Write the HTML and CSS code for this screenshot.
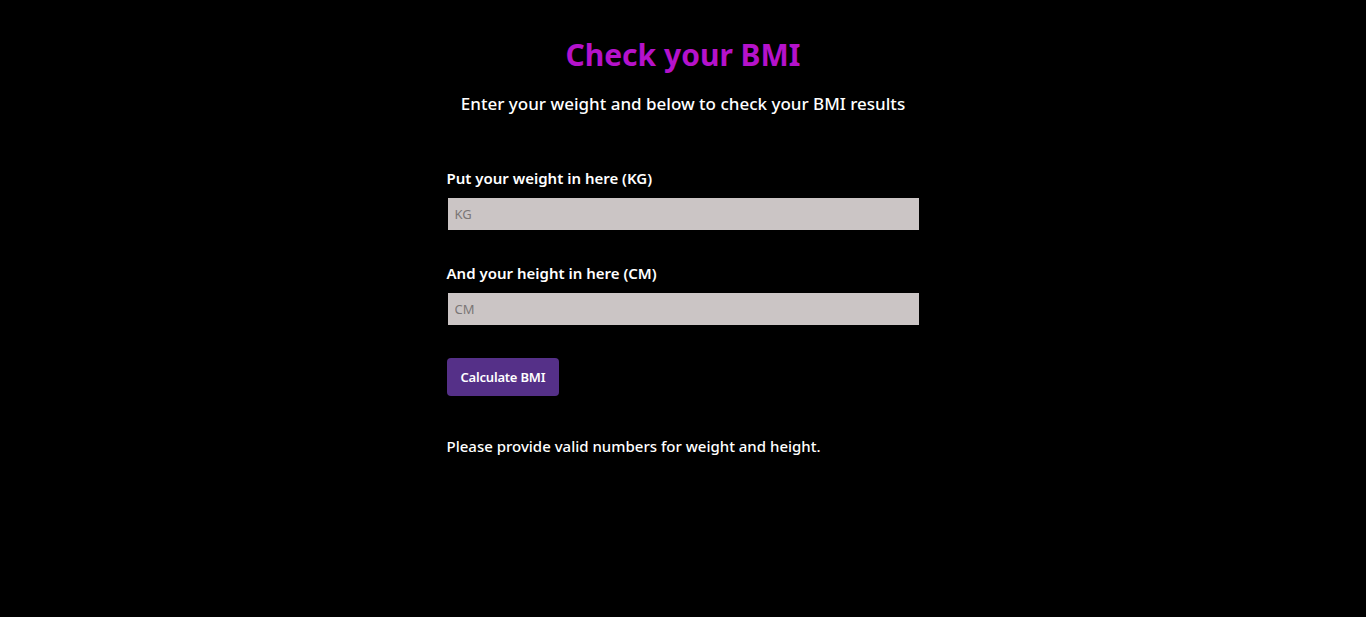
FILE: index.html
```html
<!DOCTYPE html>
<html lang="en">
<head>
<meta charset="utf-8">
<title>Check your BMI</title>
<link rel="stylesheet" href="styles.css">
</head>
<body>
<main class="page">
  <header class="intro">
    <h1 class="title">Check your BMI</h1>
    <p class="subtitle">Enter your weight and below to check your BMI results</p>
  </header>
  <form class="form">
    <div class="field">
      <label class="label" for="weight">Put your weight in here (KG)</label>
      <input class="input" id="weight" type="text" placeholder="KG">
    </div>
    <div class="field">
      <label class="label" for="height">And your height in here (CM)</label>
      <input class="input" id="height" type="text" placeholder="CM">
    </div>
    <button class="button" type="button">Calculate BMI</button>
    <p class="message">Please provide valid numbers for weight and height.</p>
  </form>
</main>
</body>
</html>
```

FILE: styles.css
```css
* { box-sizing: border-box; }
html, body { margin: 0; padding: 0; }
body {
  background: #000;
  color: #fff;
  font-family: "Noto Sans", "Open Sans", sans-serif;
  min-height: 617px;
}
.page {
  display: flex;
  flex-direction: column;
  align-items: center;
  padding-top: 33px;
}
.intro { text-align: center; }
.title {
  margin: 0;
  font-size: 30px;
  line-height: 44px;
  font-weight: 700;
  color: #b512cb;
}
.subtitle {
  margin: 15px 0 0;
  font-size: 17px;
  line-height: 24px;
  font-weight: 500;
}
.form {
  width: 473px;
  margin-top: 51px;
  display: flex;
  flex-direction: column;
  align-items: flex-start;
}
.field {
  width: 100%;
  display: flex;
  flex-direction: column;
  gap: 8px;
  margin-bottom: 31px;
}
.label {
  font-size: 15px;
  line-height: 22px;
  font-weight: 600;
}
.input {
  width: 100%;
  height: 34px;
  margin: 0;
  border: 1px solid #000;
  background: #cbc5c5;
  padding: 0 7px;
  font-family: inherit;
  font-size: 13px;
  color: #333;
  outline: none;
}
.input::placeholder { color: #7a7676; }
.button {
  margin-top: 1px;
  height: 38px;
  padding: 0 14px;
  border: none;
  border-radius: 4px;
  background: #553088;
  color: #fff;
  font-family: inherit;
  font-size: 13px;
  font-weight: 600;
  letter-spacing: -0.2px;
}
.message {
  margin: 39px 0 0;
  font-size: 15px;
  line-height: 22px;
  font-weight: 500;
}
```
